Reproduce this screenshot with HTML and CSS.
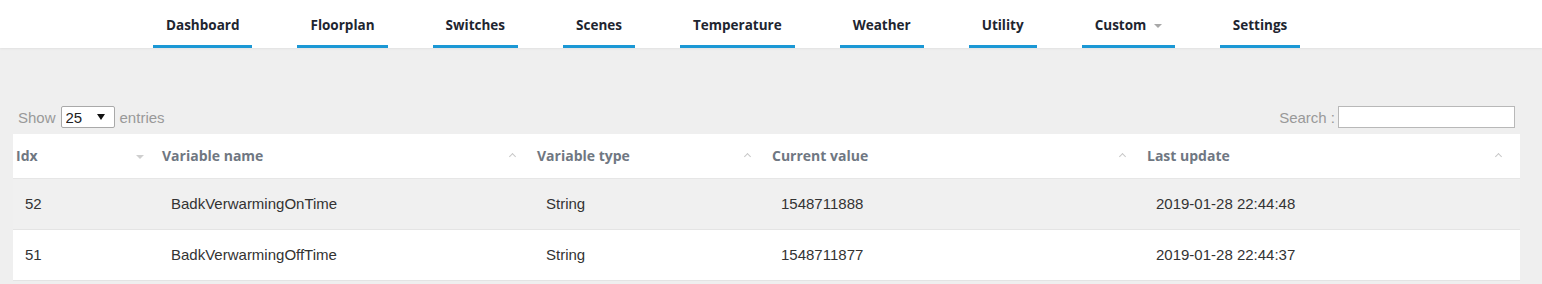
FILE: index.html
```html
<!DOCTYPE html>
<html lang="nl">
<head>
  <meta charset="UTF-8">
  <title>Domoticz - User variables</title>
  <link rel="stylesheet" href="styles.css">
</head>
<body>
  <!-- Hoofdmenu -->
  <div class="navbar">
    <a href="#" class="nav-item">Dashboard</a>
    <a href="#" class="nav-item">Floorplan</a>
    <a href="#" class="nav-item">Switches</a>
    <a href="#" class="nav-item">Scenes</a>
    <a href="#" class="nav-item">Temperature</a>
    <a href="#" class="nav-item">Weather</a>
    <a href="#" class="nav-item">Utility</a>
    <a href="#" class="nav-item">Custom <span class="caret"></span></a>
    <a href="#" class="nav-item">Settings</a>
  </div>

  <!-- Variabelen tabel -->
  <div class="content">
    <div class="table-controls">
      <label class="length">Show
        <span class="select-wrap">
          <select>
            <option>25</option>
            <option>50</option>
            <option>100</option>
          </select>
        </span>
        entries</label>
      <label class="search">Search :<input type="text"></label>
    </div>

    <table class="var-table">
      <thead>
        <tr>
          <th class="col-idx sort-desc">Idx</th>
          <th class="col-name">Variable name</th>
          <th class="col-type">Variable type</th>
          <th class="col-value">Current value</th>
          <th class="col-date">Last update</th>
        </tr>
      </thead>
      <tbody>
        <tr class="odd">
          <td>52</td>
          <td>BadkVerwarmingOnTime</td>
          <td>String</td>
          <td>1548711888</td>
          <td>2019-01-28 22:44:48</td>
        </tr>
        <tr>
          <td>51</td>
          <td>BadkVerwarmingOffTime</td>
          <td>String</td>
          <td>1548711877</td>
          <td>2019-01-28 22:44:37</td>
        </tr>
      </tbody>
    </table>
  </div>
</body>
</html>
```

FILE: styles.css
```css
body {
  margin: 0;
  background-color: #efefef;
  font-family: "Liberation Sans", Arial, sans-serif;
  font-size: 15px;
  color: #333;
}

/* Menu bovenaan */
.navbar {
  display: flex;
  gap: 45px;
  padding-left: 153px;
  background-color: #fff;
  height: 48px;
  box-shadow: 0 1px 2px rgba(0, 0, 0, 0.06);
}

.nav-item {
  display: block;
  padding: 15px 13px 10px;
  line-height: 20px;
  font-family: "Open Sans", sans-serif;
  font-weight: 700;
  font-size: 13.5px;
  color: #1e2530;
  text-decoration: none;
  border-bottom: 3px solid #1b98d5;
}

.caret {
  display: inline-block;
  margin-left: 4px;
  vertical-align: middle;
  border-left: 4px solid transparent;
  border-right: 4px solid transparent;
  border-top: 4px solid #a8a8a8;
}

/* Inhoud */
.content {
  margin: 0 22px 0 13px;
  padding-top: 58px;
}

.table-controls {
  display: flex;
  justify-content: space-between;
  align-items: center;
  padding: 0 5px;
  height: 22px;
  margin-bottom: 6px;
  color: #999;
}

.length {
  display: flex;
  align-items: center;
  gap: 5px;
}

.select-wrap {
  position: relative;
  display: inline-block;
}

.select-wrap select {
  appearance: none;
  -webkit-appearance: none;
  width: 54px;
  height: 22px;
  padding: 0 0 0 4px;
  border: 1px solid #a9a9a9;
  border-radius: 2px;
  background-color: #fff;
  font-family: "Liberation Sans", Arial, sans-serif;
  font-size: 15px;
  color: #222;
}

.select-wrap::after {
  content: "";
  position: absolute;
  right: 10px;
  top: 8px;
  border-left: 4px solid transparent;
  border-right: 4px solid transparent;
  border-top: 6px solid #111;
  pointer-events: none;
}

.search {
  display: flex;
  align-items: center;
  gap: 3px;
}

.search input {
  width: 177px;
  height: 22px;
  box-sizing: border-box;
  border: 1px solid #b8b8b8;
  margin: 0;
}

/* Tabel */
.var-table {
  width: 100%;
  border-collapse: collapse;
  background-color: #fff;
  table-layout: fixed;
}

.var-table th {
  position: relative;
  box-sizing: border-box;
  height: 44px;
  padding: 0 0 0 12px;
  text-align: left;
  font-family: "Open Sans", sans-serif;
  font-weight: 700;
  font-size: 14px;
  color: #6f7782;
  border-bottom: 1px solid #e6e6e6;
}

.var-table th::after {
  content: "";
  position: absolute;
  right: 10px;
  top: 20px;
  width: 4px;
  height: 4px;
  border-left: 1px solid #c8c8c8;
  border-top: 1px solid #c8c8c8;
  transform: rotate(45deg);
}

.var-table th.sort-desc::after {
  width: 0;
  height: 0;
  top: 21px;
  right: 6px;
  transform: none;
  border-left: 4px solid transparent;
  border-right: 4px solid transparent;
  border-top: 4px solid #cfcfcf;
}

.var-table th.col-date::after {
  right: 19px;
}

.col-idx { width: 137px; padding-left: 3px !important; }
.col-name { width: 375px; }
.col-type { width: 235px; }
.col-value { width: 375px; }

.var-table td {
  height: 50px;
  padding: 0 0 0 21px;
  border-bottom: 1px solid #e4e4e4;
  color: #333;
}

.var-table td:first-child {
  padding-left: 12px;
}

.var-table tr.odd td {
  background-color: #f0f0f0;
}
```
